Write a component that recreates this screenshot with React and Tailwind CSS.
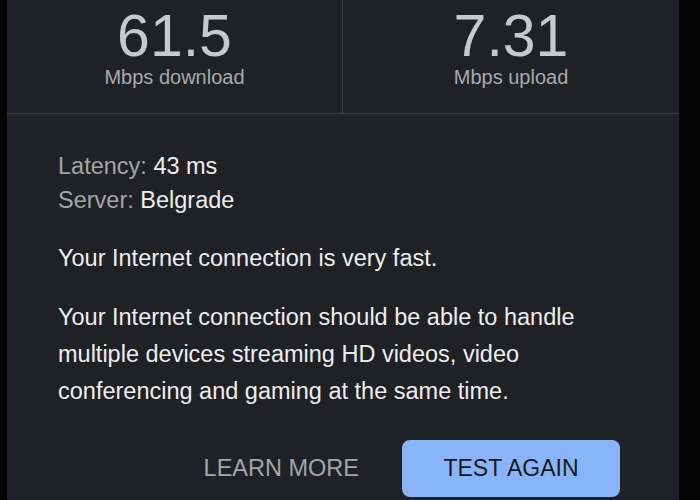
import React from "react";

const stats = [
  { value: "61.5", label: "Mbps download" },
  { value: "7.31", label: "Mbps upload" },
];

export default function App() {
  return (
    <div className="min-h-screen h-[500px] overflow-hidden bg-[#050505] flex" style={{ fontFamily: '"Liberation Sans", Arial, sans-serif' }}>
      <div className="ml-[7px] w-[672px] bg-[#202124] flex flex-col">
        <div className="grid grid-cols-2 border-b border-[#3c4043]">
          {stats.map((s, i) => (
            <div
              key={s.label}
              className={`pt-[5px] pb-[26px] text-center ${i === 0 ? "border-r border-[#3c4043]" : ""}`}
            >
              <div className="text-[59px] leading-[62px] text-[#c6c8cb]">{s.value}</div>
              <div className="text-[20px] leading-[20px] text-[#a6a9ad]">{s.label}</div>
            </div>
          ))}
        </div>

        <div className="px-[51px] pt-[35px] text-[23.5px] text-[#eceef0]">
          <div className="leading-[34px]">
            <div>
              <span className="text-[#a2a5a9]">Latency: </span>43 ms
            </div>
            <div>
              <span className="text-[#a2a5a9]">Server: </span>Belgrade
            </div>
          </div>
          <p className="mt-[24px] leading-[34px]">Your Internet connection is very fast.</p>
          <p className="mt-[24px] leading-[37px]">
            Your Internet connection should be able to handle multiple devices streaming HD videos, video
            conferencing and gaming at the same time.
          </p>
          <div className="mt-[30px] flex justify-end items-center pr-[8px]">
            <button className="mr-[43px] text-[23.5px] text-[#a2a5a9]">LEARN MORE</button>
            <button className="w-[218px] h-[57px] rounded-[8px] bg-[#8ab4f8] text-[23px] text-[#16181c]">
              TEST AGAIN
            </button>
          </div>
        </div>
      </div>
    </div>
  );
}
